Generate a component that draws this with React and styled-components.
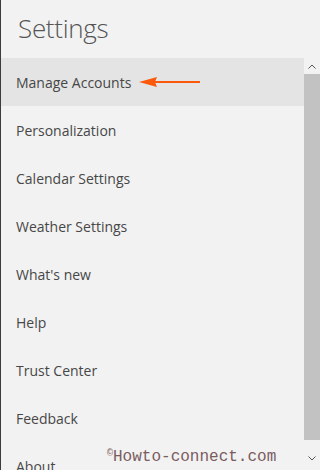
import { createGlobalStyle, styled } from "styled-components";

const Global = createGlobalStyle`
   html, body { margin: 0; padding: 0; }
   body {
      width: 320px;
      height: 470px;
      overflow: hidden;
      background: #f2f2f2;
      font-family: "Open Sans", "Noto Sans", sans-serif;
   }
`;

const Pane = styled.div`
   position: relative;
   width: 320px;
   height: 470px;
   box-sizing: border-box;
   border-left: 1px solid #3c3c3c;
   background: #f2f2f2;
   display: flex;
   flex-direction: column;
   overflow: hidden;
`;

const Title = styled.h1`
   margin: 0;
   height: 58px;
   padding: 10px 0 0 17px;
   box-sizing: border-box;
   font-size: 26px;
   font-weight: 300;
   color: #555;
   letter-spacing: -0.3px;
`;

const Body = styled.div`
   display: flex;
   flex: 1;
   min-height: 0;
`;

const List = styled.ul`
   list-style: none;
   margin: 0;
   padding: 0;
   flex: 1;
`;

const Item = styled.li`
   display: flex;
   align-items: center;
   gap: 8px;
   height: 48px;
   padding-left: 15px;
   font-size: 14px;
   color: #474747;
   background: ${(p) => (p.$active ? "#e4e4e4" : "transparent")};
`;

const Scrollbar = styled.div`
   width: 16px;
   display: flex;
   flex-direction: column;
   align-items: center;
`;

const ScrollBtn = styled.div`
   height: 16px;
   width: 16px;
   display: flex;
   align-items: center;
   justify-content: center;
   margin-bottom: ${(p) => p.$gap || 0}px;
`;

const Thumb = styled.div`
   width: 16px;
   height: 366px;
   background: #c2c2c2;
`;

const Track = styled.div`
   flex: 1;
`;

const Watermark = styled.span`
   position: absolute;
   left: 106px;
   top: 448px;
   font-family: "Liberation Mono", monospace;
   font-size: 16px;
   color: #7a5c60;

   sup {
      font-size: 10px;
      vertical-align: 5px;
   }
`;

const Chevron = ({ up }) => (
   <svg width="8" height="5" viewBox="0 0 8 5">
      <path
         d={up ? "M0.5 4.5 L4 1 L7.5 4.5" : "M0.5 0.5 L4 4 L7.5 0.5"}
         fill="none"
         stroke="#555"
         strokeWidth="1"
      />
   </svg>
);

const Arrow = () => (
   <svg width="62" height="12" viewBox="0 0 62 12">
      <path d="M0 6 L18 1 L16 6 L18 11 Z" fill="#fb5a0c" />
      <rect x="15" y="5" width="46" height="2" fill="#fb5a0c" />
   </svg>
);

const items = [
   "Manage Accounts",
   "Personalization",
   "Calendar Settings",
   "Weather Settings",
   "What's new",
   "Help",
   "Trust Center",
   "Feedback",
   "About",
];

export default function App() {
   return (
      <>
         <Global />
         <Pane>
            <Title>Settings</Title>
            <Body>
               <List>
                  {items.map((label, i) => (
                     <Item key={label} $active={i === 0}>
                        {label}
                        {i === 0 && <Arrow />}
                     </Item>
                  ))}
               </List>
               <Scrollbar>
                  <ScrollBtn><Chevron up /></ScrollBtn>
                  <Thumb />
                  <Track />
                  <ScrollBtn $gap={4}><Chevron /></ScrollBtn>
               </Scrollbar>
            </Body>
            <Watermark><sup>©</sup>Howto-connect.com</Watermark>
         </Pane>
      </>
   );
}
